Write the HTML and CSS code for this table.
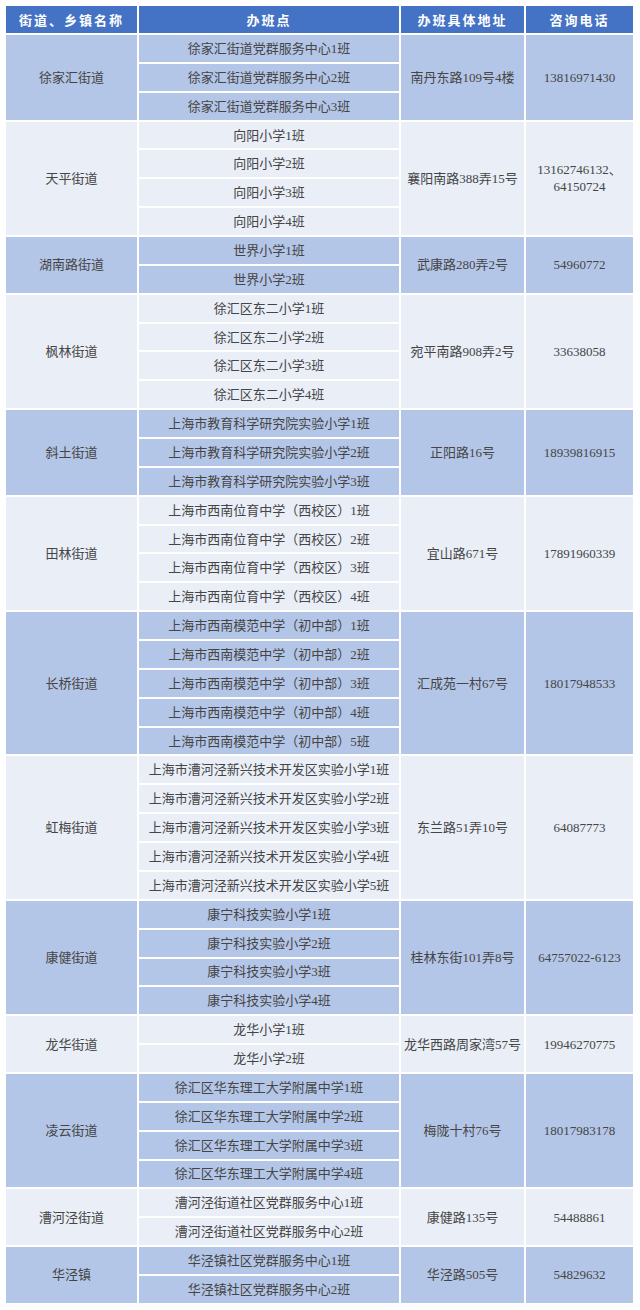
FILE: index.html
```html
<!DOCTYPE html>
<html lang="zh-CN">
<head>
<meta charset="utf-8">
<title>办班点一览</title>
<link rel="stylesheet" href="styles.css">
</head>
<body>
<table class="sheet">
  <colgroup>
    <col class="c1"><col class="c2"><col class="c3"><col class="c4">
  </colgroup>
  <thead>
    <tr><th>街道、乡镇名称</th><th>办班点</th><th>办班具体地址</th><th>咨询电话</th></tr>
  </thead>
  <tbody class="dark">
    <tr><td rowspan="3">徐家汇街道</td><td>徐家汇街道党群服务中心1班</td><td rowspan="3">南丹东路109号4楼</td><td rowspan="3">13816971430</td></tr>
    <tr><td>徐家汇街道党群服务中心2班</td></tr>
    <tr><td>徐家汇街道党群服务中心3班</td></tr>
  </tbody>
  <tbody class="light">
    <tr><td rowspan="4">天平街道</td><td>向阳小学1班</td><td rowspan="4">襄阳南路388弄15号</td><td rowspan="4">13162746132、<br>64150724</td></tr>
    <tr><td>向阳小学2班</td></tr>
    <tr><td>向阳小学3班</td></tr>
    <tr><td>向阳小学4班</td></tr>
  </tbody>
  <tbody class="dark">
    <tr><td rowspan="2">湖南路街道</td><td>世界小学1班</td><td rowspan="2">武康路280弄2号</td><td rowspan="2">54960772</td></tr>
    <tr><td>世界小学2班</td></tr>
  </tbody>
  <tbody class="light">
    <tr><td rowspan="4">枫林街道</td><td>徐汇区东二小学1班</td><td rowspan="4">宛平南路908弄2号</td><td rowspan="4">33638058</td></tr>
    <tr><td>徐汇区东二小学2班</td></tr>
    <tr><td>徐汇区东二小学3班</td></tr>
    <tr><td>徐汇区东二小学4班</td></tr>
  </tbody>
  <tbody class="dark">
    <tr><td rowspan="3">斜土街道</td><td>上海市教育科学研究院实验小学1班</td><td rowspan="3">正阳路16号</td><td rowspan="3">18939816915</td></tr>
    <tr><td>上海市教育科学研究院实验小学2班</td></tr>
    <tr><td>上海市教育科学研究院实验小学3班</td></tr>
  </tbody>
  <tbody class="light">
    <tr><td rowspan="4">田林街道</td><td>上海市西南位育中学（西校区）1班</td><td rowspan="4">宜山路671号</td><td rowspan="4">17891960339</td></tr>
    <tr><td>上海市西南位育中学（西校区）2班</td></tr>
    <tr><td>上海市西南位育中学（西校区）3班</td></tr>
    <tr><td>上海市西南位育中学（西校区）4班</td></tr>
  </tbody>
  <tbody class="dark">
    <tr><td rowspan="5">长桥街道</td><td>上海市西南模范中学（初中部）1班</td><td rowspan="5">汇成苑一村67号</td><td rowspan="5">18017948533</td></tr>
    <tr><td>上海市西南模范中学（初中部）2班</td></tr>
    <tr><td>上海市西南模范中学（初中部）3班</td></tr>
    <tr><td>上海市西南模范中学（初中部）4班</td></tr>
    <tr><td>上海市西南模范中学（初中部）5班</td></tr>
  </tbody>
  <tbody class="light">
    <tr><td rowspan="5">虹梅街道</td><td>上海市漕河泾新兴技术开发区实验小学1班</td><td rowspan="5">东兰路51弄10号</td><td rowspan="5">64087773</td></tr>
    <tr><td>上海市漕河泾新兴技术开发区实验小学2班</td></tr>
    <tr><td>上海市漕河泾新兴技术开发区实验小学3班</td></tr>
    <tr><td>上海市漕河泾新兴技术开发区实验小学4班</td></tr>
    <tr><td>上海市漕河泾新兴技术开发区实验小学5班</td></tr>
  </tbody>
  <tbody class="dark">
    <tr><td rowspan="4">康健街道</td><td>康宁科技实验小学1班</td><td rowspan="4">桂林东街101弄8号</td><td rowspan="4">64757022-6123</td></tr>
    <tr><td>康宁科技实验小学2班</td></tr>
    <tr><td>康宁科技实验小学3班</td></tr>
    <tr><td>康宁科技实验小学4班</td></tr>
  </tbody>
  <tbody class="light">
    <tr><td rowspan="2">龙华街道</td><td>龙华小学1班</td><td rowspan="2">龙华西路周家湾57号</td><td rowspan="2">19946270775</td></tr>
    <tr><td>龙华小学2班</td></tr>
  </tbody>
  <tbody class="dark">
    <tr><td rowspan="4">凌云街道</td><td>徐汇区华东理工大学附属中学1班</td><td rowspan="4">梅陇十村76号</td><td rowspan="4">18017983178</td></tr>
    <tr><td>徐汇区华东理工大学附属中学2班</td></tr>
    <tr><td>徐汇区华东理工大学附属中学3班</td></tr>
    <tr><td>徐汇区华东理工大学附属中学4班</td></tr>
  </tbody>
  <tbody class="light">
    <tr><td rowspan="2">漕河泾街道</td><td>漕河泾街道社区党群服务中心1班</td><td rowspan="2">康健路135号</td><td rowspan="2">54488861</td></tr>
    <tr><td>漕河泾街道社区党群服务中心2班</td></tr>
  </tbody>
  <tbody class="dark">
    <tr><td rowspan="2">华泾镇</td><td>华泾镇社区党群服务中心1班</td><td rowspan="2">华泾路505号</td><td rowspan="2">54829632</td></tr>
    <tr><td>华泾镇社区党群服务中心2班</td></tr>
  </tbody>
</table>
</body>
</html>
```

FILE: styles.css
```css
html, body {
  margin: 0;
  padding: 0;
  background: #ffffff;
}

.sheet {
  margin: 4px;
  border-collapse: separate;
  border-spacing: 2px;
  table-layout: fixed;
  width: 631px;
  font-family: "Liberation Serif", "Noto Sans CJK SC", serif;
  font-size: 13px;
  color: #454545;
}

.c1 { width: 131px; }
.c2 { width: 260px; }
.c3 { width: 123px; }
.c4 { width: 107px; }

.sheet th {
  height: 27px;
  padding: 0;
  background: #4472c4;
  color: #ffffff;
  font-family: "Noto Sans CJK SC", sans-serif;
  font-weight: 700;
  font-size: 13px;
  letter-spacing: 2px;
  text-align: center;
  vertical-align: middle;
  line-height: 1;
}

.sheet td {
  height: 26.87px;
  padding: 0;
  text-align: center;
  vertical-align: middle;
  line-height: 17px;
  white-space: nowrap;
}

.dark td { background: #b4c6e7; }
.light td { background: #e9eef7; }
```
